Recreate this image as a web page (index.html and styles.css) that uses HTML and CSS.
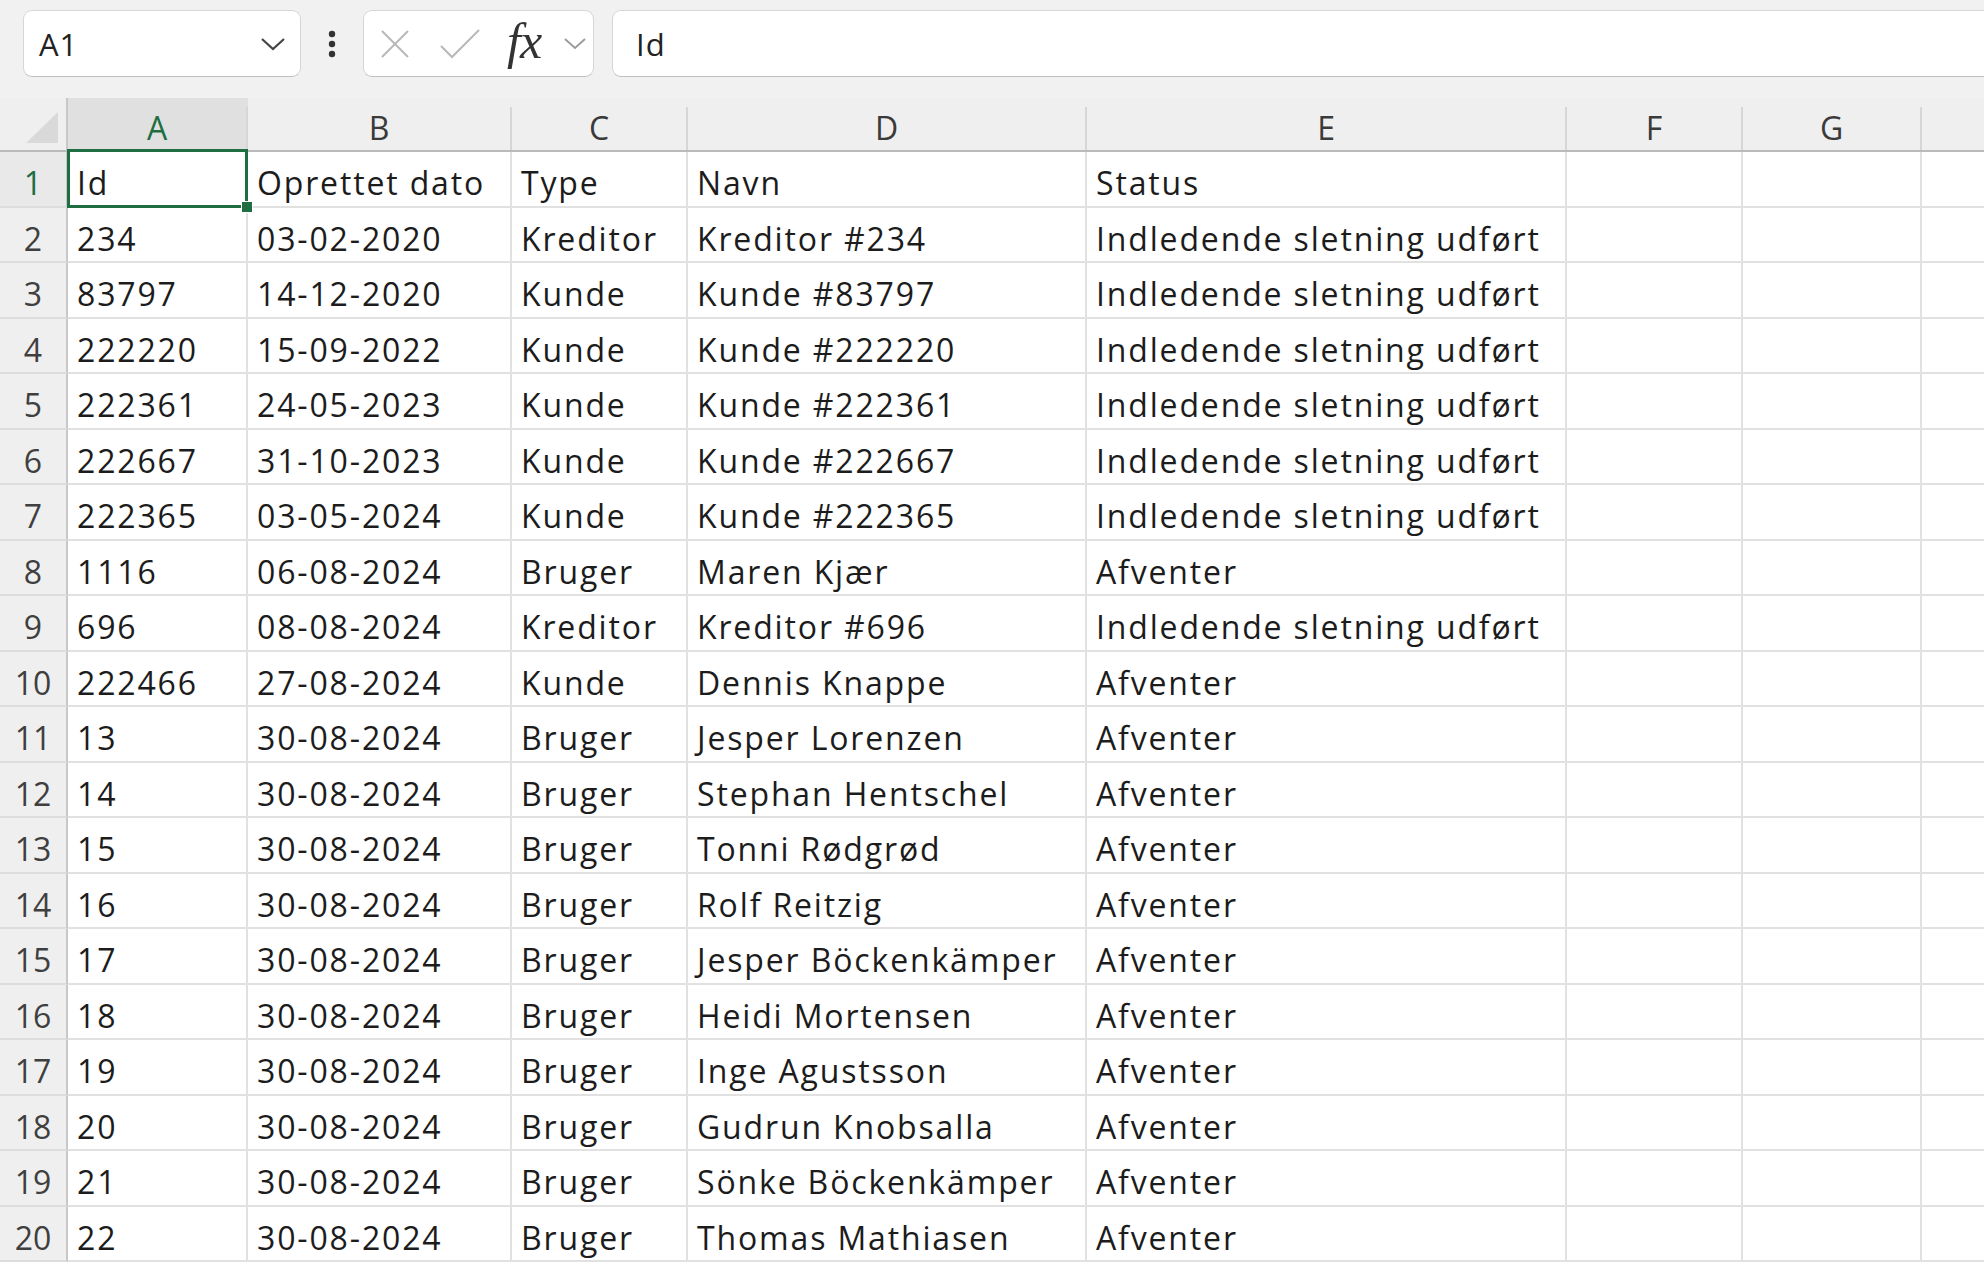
FILE: index.html
```html
<!DOCTYPE html>
<html lang="da">
  <head>
    <meta charset="UTF-8" />
    <meta name="viewport" content="width=device-width, initial-scale=1.0" />
    <title>Sletning - regneark</title>
    <link rel="stylesheet" href="styles.css">
  </head>

  <body>
    <div class="toolbar">
      <div class="name-box">
        <span>A1</span>
        <svg class="chevron" width="26" height="14" viewBox="0 0 26 14">
          <polyline points="2,2 13,12 24,2" fill="none" stroke="#444" stroke-width="2.2" />
        </svg>
      </div>
      <div class="dots">
        <svg width="8" height="28" viewBox="0 0 8 28">
          <circle cx="4" cy="4" r="3.2" fill="#333" />
          <circle cx="4" cy="14" r="3.2" fill="#333" />
          <circle cx="4" cy="24" r="3.2" fill="#333" />
        </svg>
      </div>
      <div class="fx-box">
        <svg class="cancel" width="32" height="28" viewBox="0 0 32 28">
          <line x1="3" y1="1" x2="29" y2="27" stroke="#b8b8b8" stroke-width="2" />
          <line x1="29" y1="1" x2="3" y2="27" stroke="#b8b8b8" stroke-width="2" />
        </svg>
        <svg class="enter" width="42" height="30" viewBox="0 0 42 30">
          <polyline points="2,17 13,28 40,1" fill="none" stroke="#b8b8b8" stroke-width="2" />
        </svg>
        <span class="fx">fx</span>
        <svg class="chevron-sm" width="22" height="12" viewBox="0 0 22 12">
          <polyline points="1,1 11,10 21,1" fill="none" stroke="#9a9a9a" stroke-width="1.8" />
        </svg>
      </div>
      <div class="formula">Id</div>
    </div>

    <div class="viewport">
      <div class="sheet" id="sheet">
        <!-- cells are filled in by the script below -->
      </div>
    </div>

    <script>
      const columns = ["A", "B", "C", "D", "E", "F", "G", "H"];

      const rows = [
        ["Id", "Oprettet dato", "Type", "Navn", "Status"],
        ["234", "03-02-2020", "Kreditor", "Kreditor #234", "Indledende sletning udført"],
        ["83797", "14-12-2020", "Kunde", "Kunde #83797", "Indledende sletning udført"],
        ["222220", "15-09-2022", "Kunde", "Kunde #222220", "Indledende sletning udført"],
        ["222361", "24-05-2023", "Kunde", "Kunde #222361", "Indledende sletning udført"],
        ["222667", "31-10-2023", "Kunde", "Kunde #222667", "Indledende sletning udført"],
        ["222365", "03-05-2024", "Kunde", "Kunde #222365", "Indledende sletning udført"],
        ["1116", "06-08-2024", "Bruger", "Maren Kjær", "Afventer"],
        ["696", "08-08-2024", "Kreditor", "Kreditor #696", "Indledende sletning udført"],
        ["222466", "27-08-2024", "Kunde", "Dennis Knappe", "Afventer"],
        ["13", "30-08-2024", "Bruger", "Jesper Lorenzen", "Afventer"],
        ["14", "30-08-2024", "Bruger", "Stephan Hentschel", "Afventer"],
        ["15", "30-08-2024", "Bruger", "Tonni Rødgrød", "Afventer"],
        ["16", "30-08-2024", "Bruger", "Rolf Reitzig", "Afventer"],
        ["17", "30-08-2024", "Bruger", "Jesper Böckenkämper", "Afventer"],
        ["18", "30-08-2024", "Bruger", "Heidi Mortensen", "Afventer"],
        ["19", "30-08-2024", "Bruger", "Inge Agustsson", "Afventer"],
        ["20", "30-08-2024", "Bruger", "Gudrun Knobsalla", "Afventer"],
        ["21", "30-08-2024", "Bruger", "Sönke Böckenkämper", "Afventer"],
        ["22", "30-08-2024", "Bruger", "Thomas Mathiasen", "Afventer"]
      ];

      function makeCell(className, text) {
        const cell = document.createElement("div");
        cell.className = className;
        cell.textContent = text;
        return cell;
      }

      function buildSheet() {
        const sheet = document.getElementById("sheet");

        sheet.appendChild(makeCell("corner", ""));

        columns.forEach(function (letter, i) {
          const cls = i === 0 ? "col-head active" : "col-head";
          sheet.appendChild(makeCell(cls, letter));
        });

        rows.forEach(function (values, r) {
          const rowCls = r === 0 ? "row-head active" : "row-head";
          sheet.appendChild(makeCell(rowCls, r + 1));

          for (let c = 0; c < columns.length; c++) {
            const cls = r === 0 && c === 0 ? "cell selected" : "cell";
            sheet.appendChild(makeCell(cls, values[c] || ""));
          }
        });
      }

      document.addEventListener("DOMContentLoaded", function () {
        buildSheet();
      });
    </script>
  </body>
</html>
```

FILE: styles.css
```css
body {
  margin: 0;
  background-color: #f1f1f1;
  font-family: "Open Sans", Lato, sans-serif;
  color: #1c1c1c;
  overflow: hidden;
}

.toolbar {
  display: flex;
  align-items: stretch;
  height: 98px;
  padding: 10px 0 0 23px;
  box-sizing: border-box;
}

.toolbar > div {
  height: 67px;
  box-sizing: border-box;
}

.name-box,
.fx-box,
.formula {
  background-color: #fff;
  border: 1px solid #d6d6d6;
  border-bottom-color: #bfbfbf;
  border-radius: 9px;
}

.name-box {
  width: 278px;
  display: flex;
  align-items: center;
  justify-content: space-between;
  padding: 0 14px 0 15px;
  font-size: 31px;
  font-weight: 500;
  letter-spacing: 1px;
  color: #222;
}

.dots {
  width: 62px;
  display: flex;
  align-items: center;
  justify-content: center;
}

.fx-box {
  width: 231px;
  display: flex;
  align-items: center;
  padding: 0 7px 0 15px;
}

.fx-box .enter {
  margin-left: 28px;
}

.fx {
  margin-left: 26px;
  font-family: "Liberation Serif", serif;
  font-style: italic;
  font-size: 50px;
  color: #333;
  letter-spacing: -1px;
  margin-top: -6px;
}

.fx-box .chevron-sm {
  margin-left: auto;
}

.formula {
  flex: 1;
  margin-left: 18px;
  border-right: none;
  border-top-right-radius: 0;
  border-bottom-right-radius: 0;
  display: flex;
  align-items: center;
  padding-left: 23px;
  font-size: 31px;
  font-weight: 500;
  letter-spacing: 1px;
  color: #222;
}

.viewport {
  overflow: hidden;
  width: 100%;
}

.sheet {
  display: grid;
  grid-template-columns: 68px 180px 264px 176px 399px 480px 176px 179px 179px;
  grid-template-rows: 54px repeat(20, 55.5px);
  width: 2101px;
  background-color: #fff;
  font-size: 32px;
  font-weight: 500;
  letter-spacing: 1.85px;
  line-height: 1.2;
}

.corner {
  background-color: #efefef;
  border-bottom: 2px solid #bababa;
  border-right: 2px solid #c8c8c8;
  display: flex;
  justify-content: flex-end;
  align-items: flex-end;
  padding: 0 8px 7px 0;
  box-sizing: border-box;
}

.corner::before {
  content: "";
  width: 0;
  height: 0;
  border-left: 32px solid transparent;
  border-bottom: 31px solid #d9d9d9;
}

.col-head {
  background-color: #efefef;
  background-image: linear-gradient(#d6d6d6, #d6d6d6);
  background-repeat: no-repeat;
  background-position: right bottom;
  background-size: 2px calc(100% - 9px);
  border-bottom: 2px solid #bababa;
  color: #3a3a3a;
  display: flex;
  justify-content: center;
  align-items: flex-end;
  padding-bottom: 3px;
  box-sizing: border-box;
}

.col-head.active {
  background-color: #e0e0e0;
  color: #1e6e42;
}

.row-head {
  background-color: #efefef;
  border-right: 2px solid #c8c8c8;
  border-bottom: 2px solid #dddddd;
  color: #3f3f3f;
  display: flex;
  justify-content: center;
  align-items: flex-end;
  padding-bottom: 3px;
  box-sizing: border-box;
  letter-spacing: 0;
}

.row-head.active {
  background-color: #e9e9e9;
  color: #1e6e42;
}

.cell {
  border-right: 2px solid #e1e1e1;
  border-bottom: 2px solid #e1e1e1;
  display: flex;
  align-items: flex-end;
  padding: 0 0 3px 9px;
  box-sizing: border-box;
  white-space: nowrap;
}

.cell.selected {
  position: relative;
}

.cell.selected::after {
  content: "";
  position: absolute;
  left: -1px;
  top: -3px;
  right: -2px;
  bottom: -2px;
  border: 3px solid #1e6e42;
}

.cell.selected::before {
  content: "";
  position: absolute;
  right: -7px;
  bottom: -7px;
  width: 10px;
  height: 10px;
  background-color: #1e6e42;
  border: 1px solid #fff;
  z-index: 1;
}
```
